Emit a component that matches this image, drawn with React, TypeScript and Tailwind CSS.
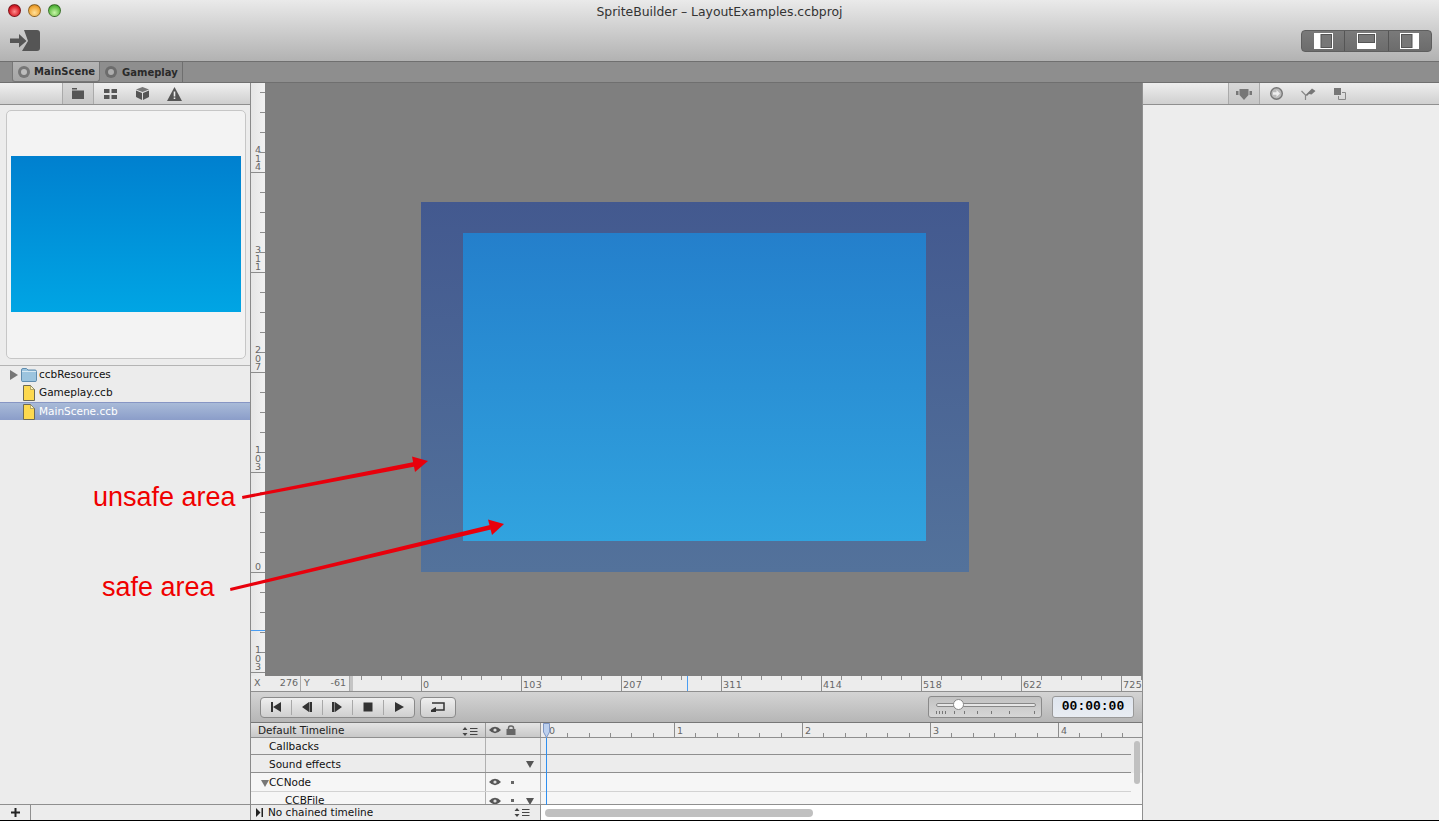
const uiFont = "font-['DejaVu_Sans',sans-serif]";

const hMajor = [
  { x: 421, label: "0" },
  { x: 521, label: "103" },
  { x: 621, label: "207" },
  { x: 721, label: "311" },
  { x: 821, label: "414" },
  { x: 921, label: "518" },
  { x: 1021, label: "622" },
  { x: 1121, label: "725" },
];

const vMajor = [
  { y: 172, label: "414" },
  { y: 272, label: "311" },
  { y: 372, label: "207" },
  { y: 472, label: "103" },
  { y: 572, label: "0" },
  { y: 672, label: "103" },
];

function VerticalRuler() {
  const minor: number[] = [];
  for (let y = 92; y < 676; y += 20) if ((y - 172) % 100 !== 0) minor.push(y);
  return (
    <svg width="14" height="593" viewBox="251 83 14 593" className="shrink-0 bg-gradient-to-r from-[#e6e6e6] to-[#f1f1f1]">
      {minor.map((y) => (
        <rect key={y} x="260" y={y} width="5" height="1" className="fill-[#8c8c8c]" />
      ))}
      {vMajor.map((m) => (
        <g key={m.y}>
          <rect x="251" y={m.y} width="14" height="1" className="fill-[#8c8c8c]" />
          {m.label.split("").map((d, i) => (
            <text
              key={i}
              x="258"
              y={m.y - 2 - (m.label.length - 1 - i) * 8.5}
              textAnchor="middle"
              className="fill-[#666] text-[9.5px]"
            >
              {d}
            </text>
          ))}
        </g>
      ))}
      <rect x="251" y="630" width="14" height="1" className="fill-[#4a9df2]" />
    </svg>
  );
}

function HorizontalRuler() {
  const minor: number[] = [];
  for (let x = 361; x < 1142; x += 20) if ((x - 421) % 100 !== 0) minor.push(x);
  return (
    <svg width="792" height="15" viewBox="350 0 792 15" className="shrink-0">
      <rect x="350" y="0" width="3" height="15" className="fill-[#c4c4c4]" />
      {minor.map((x) => (
        <rect key={x} x={x} y="0" width="1" height="4" className="fill-[#8c8c8c]" />
      ))}
      {hMajor.map((m) => (
        <g key={m.x}>
          <rect x={m.x} y="0" width="1" height="15" className="fill-[#8c8c8c]" />
          <text x={m.x + 2} y="12" className="fill-[#666] text-[9.5px] tracking-[0.3px]">
            {m.label}
          </text>
        </g>
      ))}
      <rect x="687" y="0" width="1" height="15" className="fill-[#4a9df2]" />
    </svg>
  );
}

function TimeRuler() {
  const major = [
    { x: 547, label: "0" },
    { x: 675, label: "1" },
    { x: 803, label: "2" },
    { x: 931, label: "3" },
    { x: 1059, label: "4" },
  ];
  const minor: number[] = [];
  for (let i = 0; i < 28; i++) if (i % 6 !== 0) minor.push(Math.round(547 + i * 21.33));
  return (
    <svg width="600" height="14" viewBox="542 0 600 14" className="shrink-0">
      {minor.map((x) => (
        <rect key={x} x={x} y="10" width="1" height="4" className="fill-[#8c8c8c]" />
      ))}
      {major.map((m) => (
        <g key={m.x}>
          <rect x={m.x} y="0" width="1" height="14" className="fill-[#8c8c8c]" />
          <text x={m.x + 3} y="11" className="fill-[#666] text-[9.5px]">
            {m.label}
          </text>
        </g>
      ))}
    </svg>
  );
}

function Light({ color }: { color: string }) {
  return <div className={`w-[13px] h-[13px] rounded-full border border-black/40 ${color}`} />;
}

function ExportIcon() {
  return (
    <svg width="31" height="22" viewBox="0 0 31 22">
      <path d="M14 0H27Q30 0 30 3V18Q30 21 27 21H12L18 11Z" fill="#555" />
      <path d="M0 8.5H9V4L16.5 11L9 17.5V13H0Z" fill="#555" />
    </svg>
  );
}

function PaneIcon({ kind }: { kind: "left" | "bottom" | "right" }) {
  return (
    <svg width="19" height="16" viewBox="0 0 19 16">
      <rect x="0" y="0" width="19" height="16" fill="white" />
      {kind === "left" && <rect x="7" y="1.5" width="10.5" height="13" fill="#777" stroke="#555" />}
      {kind === "bottom" && <rect x="1.5" y="1.5" width="16" height="8" fill="#777" stroke="#555" />}
      {kind === "right" && <rect x="1.5" y="1.5" width="10.5" height="13" fill="#777" stroke="#555" />}
    </svg>
  );
}

function Eye() {
  return (
    <svg width="12" height="8" viewBox="0 0 12 8">
      <path d="M0 4Q6 -2.5 12 4Q6 10.5 0 4Z" fill="#555" />
      <circle cx="6" cy="4" r="1.6" fill="#ddd" />
    </svg>
  );
}

function Lock() {
  return (
    <svg width="10" height="10" viewBox="0 0 10 10">
      <rect x="0.5" y="4" width="9" height="6" fill="#666" />
      <path d="M2.5 4.5V3Q2.5 1 5 1Q7.5 1 7.5 3V4.5" fill="none" stroke="#666" strokeWidth="1.5" />
    </svg>
  );
}

function SortLines() {
  return (
    <svg width="16" height="9" viewBox="0 0 16 9">
      <path d="M3 0L5.5 3H0.5Z M3 9L0.5 6H5.5Z" fill="#444" />
      <path d="M8 1.5H15.5M8 4.5H15.5M8 7.5H15.5" stroke="#444" strokeWidth="1" />
    </svg>
  );
}

function DownTriangle({ fill = "#555" }: { fill?: string }) {
  return (
    <svg width="8" height="8" viewBox="0 0 8 8">
      <path d="M0 1H8L4 8Z" fill={fill} />
    </svg>
  );
}

function Dot() {
  return <div className="w-[3px] h-[3px] bg-[#666]" />;
}

function FileIcon() {
  return (
    <svg width="12" height="16" viewBox="0 0 12 16">
      <path d="M0.5 0.5H7.5L11.5 4.5V15.5H0.5Z" fill="#fdd94f" stroke="#6d6a55" />
      <path d="M7.5 0.5V4.5H11.5Z" fill="#fff3b5" stroke="#6d6a55" strokeWidth="0.5" />
    </svg>
  );
}

function FolderIcon() {
  return (
    <svg width="16" height="14" viewBox="0 0 16 14">
      <path d="M0.5 2Q0.5 0.5 2 0.5H5.5L7 2H14Q15.5 2 15.5 3.5V12.5Q15.5 13.5 14 13.5H2Q0.5 13.5 0.5 12.5Z" fill="#9cc4de" stroke="#5f8cae" />
      <rect x="1" y="3" width="14" height="1" fill="#d7e9f3" />
    </svg>
  );
}

function ToolTab({ selected, children }: { selected?: boolean; children: React.ReactNode }) {
  return (
    <div
      className={`w-8 h-full flex items-center justify-center ${
        selected ? "border-x border-[#aaa] bg-gradient-to-b from-[#d8d8d8] to-[#c6c6c6]" : ""
      }`}
    >
      {children}
    </div>
  );
}

function TransportIcon({ d }: { d: string }) {
  return (
    <svg width="12" height="10" viewBox="0 0 12 10">
      <path d={d} fill="#333" />
    </svg>
  );
}

function TransportDivider() {
  return <div className="w-px h-[15px] bg-[#a8a8a8]" />;
}

function TimelineRow({
  label,
  indent,
  light,
  soft,
  tri,
  eye,
  dot,
  arrow,
  h,
  pad = "pt-[2px]",
}: {
  label: string;
  indent: string;
  light?: boolean;
  soft?: boolean;
  tri?: boolean;
  eye?: boolean;
  dot?: boolean;
  arrow?: boolean;
  h: string;
  pad?: string;
}) {
  return (
    <div className={`flex shrink-0 ${h}`}>
      <div
        className={`w-[290px] flex border-b ${soft ? "border-[#d2d2d2]" : "border-[#8f8f8f]"} ${
          light ? "bg-[#f6f6f6]" : "bg-[#ececec]"
        }`}
      >
        <div className={`w-[234px] flex items-center ${pad} text-[10.5px] text-[#111] ${indent} overflow-hidden`}>
          {tri && (
            <span className="mr-0">
              <DownTriangle fill="#777" />
            </span>
          )}
          {label}
        </div>
        <div className="w-[56px] border-x border-[#b0b0b0] flex items-center relative">
          {eye && (
            <span className="absolute left-[3px]">
              <Eye />
            </span>
          )}
          {dot && (
            <span className="absolute left-[25px]">
              <Dot />
            </span>
          )}
          {arrow && (
            <span className="absolute left-[40px]">
              <DownTriangle />
            </span>
          )}
        </div>
      </div>
      <div className={`flex-1 flex ${light ? "bg-[#f6f6f6]" : "bg-[#ececec]"}`}>
        <div className={`flex-1 border-b ${soft ? "border-[#d2d2d2]" : "border-[#8f8f8f]"}`} />
        <div className="w-[11px]" />
      </div>
    </div>
  );
}

export default function App() {
  return (
    <div className={`${uiFont} relative w-full h-screen overflow-hidden flex flex-col bg-[#ececec]`}>
      {/* title bar and toolbar */}
      <div className="h-[62px] shrink-0 border-b border-[#6f6f6f] bg-gradient-to-b from-[#eaeaea] to-[#b2b2b2] flex flex-col">
        <div className="relative h-[23px] pt-px flex items-center justify-center text-[12.4px] text-[#333]">
          <div className="absolute left-[8px] top-[4px] flex gap-[7px]">
            <Light color="bg-[radial-gradient(circle_at_50%_60%,#ff8f8f,#d8202a_60%,#a8101a)]" />
            <Light color="bg-[radial-gradient(circle_at_50%_70%,#ffe09a,#f2a93a_60%,#c87a10)]" />
            <Light color="bg-[radial-gradient(circle_at_50%_70%,#c9f5a8,#63bf48_60%,#2f8f20)]" />
          </div>
          SpriteBuilder – LayoutExamples.ccbproj
        </div>
        <div className="flex items-center justify-between pl-[10px] pr-[7px] pt-[7px]">
          <ExportIcon />
          <div className="flex w-[131px] h-[22px] rounded-[4px] border border-[#5e5e5e] bg-gradient-to-b from-[#7a7a7a] to-[#6c6c6c]">
            <div className="flex-1 flex items-center justify-center border-r border-[#555]">
              <PaneIcon kind="left" />
            </div>
            <div className="flex-1 flex items-center justify-center border-r border-[#555]">
              <PaneIcon kind="bottom" />
            </div>
            <div className="flex-1 flex items-center justify-center">
              <PaneIcon kind="right" />
            </div>
          </div>
        </div>
      </div>

      {/* document tabs */}
      <div className="h-[21px] shrink-0 border-b border-[#6f6f6f] bg-[#8e8e8e] flex pl-[12px] text-[10px] font-bold text-[#2a2a2a]">
        <div className="w-[88px] h-[20px] flex items-center gap-[4px] pl-[5px] rounded-b-[3px] border-x border-b border-[#777] bg-gradient-to-b from-[#b4b4b4] to-[#a6a6a6]">
          <div className="w-[12px] h-[12px] rounded-full bg-[#777] flex items-center justify-center">
            <div className="w-[6px] h-[6px] rounded-full bg-[#bdbdbd]" />
          </div>
          MainScene
        </div>
        <div className="w-[83px] h-[20px] flex items-center gap-[5px] pl-[5px] border-r border-[#6f6f6f] bg-[#8e8e8e]">
          <div className="w-[12px] h-[12px] rounded-full bg-[#6c6c6c] flex items-center justify-center">
            <div className="w-[6px] h-[6px] rounded-full bg-[#adadad]" />
          </div>
          Gameplay
        </div>
      </div>

      <div className="flex-1 min-h-0 flex">
        {/* left pane */}
        <div className="w-[251px] shrink-0 border-r border-[#8a8a8a] flex flex-col">
          <div className="h-[22px] shrink-0 border-b border-[#8f8f8f] bg-gradient-to-b from-[#f0f0f0] to-[#cfcfcf] flex items-center pl-[62px]">
            <ToolTab selected>
              <svg width="12" height="11" viewBox="0 0 12 11">
                <path d="M0 0H5V1.5H0Z M0 2.5H12V11H0Z" fill="#555" />
              </svg>
            </ToolTab>
            <ToolTab>
              <svg width="13" height="10" viewBox="0 0 13 10">
                <path d="M0 0H5.5V4H0Z M7.5 0H13V4H7.5Z M0 6H5.5V10H0Z M7.5 6H13V10H7.5Z" fill="#555" />
              </svg>
            </ToolTab>
            <ToolTab>
              <svg width="13" height="13" viewBox="0 0 13 13">
                <path d="M6.5 0L13 2.5L6.5 5L0 2.5Z" fill="#777" />
                <path d="M0 3.5L6 6V13L0 10Z M13 3.5L7 6V13L13 10Z" fill="#555" />
              </svg>
            </ToolTab>
            <ToolTab>
              <svg width="15" height="14" viewBox="0 0 15 14">
                <path d="M7.5 0L15 14H0Z" fill="#555" />
                <path d="M6.7 4.5H8.3V9.5H6.7Z M6.7 10.5H8.3V12H6.7Z" fill="#eee" />
              </svg>
            </ToolTab>
          </div>
          <div className="pl-[6px] pr-[4px] pt-[5px] pb-[6px] bg-[#ececec]">
            <div className="h-[249px] rounded-[5px] border border-[#c6c6c6] bg-[#f3f3f3] px-[4px] pt-[45px]">
              <div className="w-full h-[156px] bg-gradient-to-b from-[#0080cf] to-[#00a5e4]" />
            </div>
          </div>
          <div className="border-t border-[#b4b4b4] flex-1 text-[10.5px] text-[#111]">
            <div className="h-[18px] flex items-center pl-[10px]">
              <svg width="8" height="10" viewBox="0 0 8 10" className="mr-[3px]">
                <path d="M0 0L8 5L0 10Z" fill="#777" />
              </svg>
              <FolderIcon />
              <span className="ml-[2px]">ccbResources</span>
            </div>
            <div className="h-[18px] flex items-center pl-[23px]">
              <FileIcon />
              <span className="ml-[4px]">Gameplay.ccb</span>
            </div>
            <div className="h-[18px] flex items-center pl-[23px] border-t border-[#8796c4] bg-gradient-to-b from-[#a9bbd8] to-[#8b9dc9] text-white">
              <FileIcon />
              <span className="ml-[4px]">MainScene.ccb</span>
            </div>
          </div>
          <div className="h-[16px] shrink-0 border-t border-[#8f8f8f] flex">
            <div className="w-[31px] border-r border-[#8f8f8f] flex items-center justify-center">
              <svg width="9" height="9" viewBox="0 0 9 9">
                <path d="M3.5 0H5.5V3.5H9V5.5H5.5V9H3.5V5.5H0V3.5H3.5Z" fill="#222" />
              </svg>
            </div>
          </div>
        </div>

        {/* center */}
        <div className="w-[892px] shrink-0 flex flex-col border-r border-[#8f8f8f]">
          <div className="h-[593px] shrink-0 flex">
            <VerticalRuler />
            <div className="flex-1 bg-[#7f7f7f] pl-[156px] pt-[119px]">
              <div className="w-[548px] h-[370px] bg-gradient-to-b from-[#43598f] to-[#53729b] pl-[42px] pt-[31px]">
                <div className="w-[463px] h-[308px] bg-gradient-to-b from-[#247fcb] to-[#31a3df]" />
              </div>
            </div>
          </div>

          <div className="h-[16px] shrink-0 border-b border-[#8f8f8f] bg-[#ececec] flex text-[9.5px] text-[#666]">
            <div className="w-[50px] border-r border-[#aaa] flex items-center justify-between pl-[3px] pr-[2px]">
              <span>X</span>
              <span>276</span>
            </div>
            <div className="w-[49px] border-r border-[#aaa] flex items-center justify-between pl-[3px] pr-[3px]">
              <span>Y</span>
              <span>-61</span>
            </div>
            <HorizontalRuler />
          </div>

          <div className="h-[31px] shrink-0 border-b border-[#777] bg-gradient-to-b from-[#d4d4d4] to-[#b6b6b6] flex items-center pl-[9px]">
            <div className="w-[155px] h-[21px] rounded-[4px] border border-[#8a8a8a] bg-gradient-to-b from-[#efefef] to-[#cfcfcf] flex items-center justify-around px-[5px]">
              <TransportIcon d="M1 0H3V10H1Z M3 5L11 0V10Z" />
              <TransportDivider />
              <TransportIcon d="M1 5L8 0V10Z M8.5 0H11V10H8.5Z" />
              <TransportDivider />
              <TransportIcon d="M1 0H3.5V10H1Z M4 0L11 5L4 10Z" />
              <TransportDivider />
              <TransportIcon d="M1.5 0.5H10.5V9.5H1.5Z" />
              <TransportDivider />
              <TransportIcon d="M2 0L11 5L2 10Z" />
            </div>
            <div className="ml-[5px] w-[36px] h-[21px] rounded-[4px] border border-[#8a8a8a] bg-gradient-to-b from-[#efefef] to-[#cfcfcf] flex items-center justify-center">
              <svg width="14" height="10" viewBox="0 0 14 10">
                <path d="M1 1H13V8H5" fill="none" stroke="#333" strokeWidth="1.5" />
                <path d="M0 8L5 5V10H0Z" fill="#333" />
              </svg>
            </div>
            <div className="ml-[472px] w-[114px] h-[22px] rounded-[3px] border border-[#8a8a8a] bg-gradient-to-b from-[#c2c2c2] to-[#d6d6d6] relative">
              <div className="absolute left-[7px] right-[5px] top-[6px] h-[4px] rounded-full bg-[#e6e6e6] border border-[#888]" />
              <div className="absolute left-[24px] top-[2px] w-[11px] h-[11px] rounded-full border border-[#888] bg-white" />
              <svg width="100" height="4" viewBox="0 0 100 4" className="absolute left-[7px] top-[14px]">
                <path d="M0.5 0V3M3.5 0V3M6.5 0V3M9.5 0V3M18.5 0V3M28.5 0V3M41.5 0V3M55.5 0V3M73.5 0V3M98.5 0V3" stroke="#777" strokeWidth="1" />
              </svg>
            </div>
            <div className="ml-[10px] w-[82px] h-[22px] rounded-[3px] border border-[#999] bg-gradient-to-b from-[#dfe5ee] to-[#e9edf3] flex items-center justify-center font-['Liberation_Mono',monospace] font-bold text-[13px] text-black">
              00:00:00
            </div>
          </div>

          {/* timeline */}
          <div className="flex-1 min-h-0 relative flex flex-col">
            <div className="h-[15px] shrink-0 border-b border-[#8f8f8f] flex text-[10.5px] text-[#222]">
              <div className="w-[234px] pt-[2px] bg-gradient-to-b from-[#e4e4e4] to-[#c8c8c8] flex items-center justify-between pl-[7px] pr-[7px]">
                Default Timeline
                <SortLines />
              </div>
              <div className="w-[56px] border-x border-[#999] bg-gradient-to-b from-[#e4e4e4] to-[#c8c8c8] flex items-center gap-[5px] pl-[3px]">
                <Eye />
                <Lock />
              </div>
              <div className="flex-1 bg-[#ececec] overflow-hidden">
                <TimeRuler />
              </div>
            </div>
            <div className="flex-1 min-h-0 overflow-hidden flex flex-col relative">
              <TimelineRow h="h-[17px]" label="Callbacks" indent="pl-[18px]" />
              <TimelineRow h="h-[18px]" label="Sound effects" indent="pl-[18px]" arrow />
              <TimelineRow h="h-[19px]" label="CCNode" indent="pl-[10px]" light soft tri eye dot />
              <TimelineRow h="h-[18px]" label="CCBFile" indent="pl-[34px]" pad="pt-0" light soft eye dot arrow />
              <div className="absolute right-[2px] top-[3px] w-[6px] h-[43px] rounded-full bg-[#c0c0c0]" />
            </div>
            <div className="h-[16px] shrink-0 border-t border-[#8f8f8f] bg-[#ececec] flex text-[10.5px] text-[#111]">
              <div className="w-[234px] flex items-center pl-[5px]">
                <svg width="7" height="9" viewBox="0 0 7 9" className="mr-[5px]">
                  <path d="M0 0L4.5 4.5L0 9Z M5.5 0H7V9H5.5Z" fill="#222" />
                </svg>
                No chained timeline
              </div>
              <div className="w-[56px] border-r border-[#8f8f8f] flex items-center pl-[29px]">
                <SortLines />
              </div>
              <div className="flex-1 bg-white flex items-center pl-[4px]">
                <div className="w-[268px] h-[8px] rounded-full bg-[#c0c0c0]" />
              </div>
            </div>
            {/* playhead */}
            <div className="absolute left-[295px] top-[14px] bottom-[15px] w-[1px] bg-[#2f8fef]" />
            <svg width="7" height="15" viewBox="0 0 7 15" className="absolute left-[292px] top-0">
              <path d="M0.5 0.5H6.5V9L3.5 14.5L0.5 9Z" fill="#bcd0ee" stroke="#7f97c4" />
            </svg>
          </div>
        </div>

        {/* right pane */}
        <div className="flex-1 flex flex-col bg-[#ededed]">
          <div className="h-[22px] shrink-0 border-b border-[#8f8f8f] bg-gradient-to-b from-[#eeeeee] to-[#d0d0d0] flex items-center pl-[85px]">
            <ToolTab selected>
              <svg width="16" height="12" viewBox="0 0 16 12">
                <path d="M3.5 1H12.5V7L8 12L3.5 7Z M0 3H2.5V7H0Z M13.5 3H16V7H13.5Z" fill="#777" />
              </svg>
            </ToolTab>
            <ToolTab>
              <svg width="13" height="13" viewBox="0 0 13 13">
                <circle cx="6.5" cy="6.5" r="5.8" fill="#bbb" stroke="#777" strokeWidth="1.4" />
                <path d="M3 5.2H6.5V3L10 6.5L6.5 10V7.8H3Z" fill="#eee" />
              </svg>
            </ToolTab>
            <ToolTab>
              <svg width="15" height="13" viewBox="0 0 15 13">
                <path d="M0.5 4L4.5 8V13" fill="none" stroke="#888" strokeWidth="1.2" />
                <path d="M4.5 8L11 1.5L14.5 4L10.5 7.5L8 7L6 9Z" fill="#777" />
              </svg>
            </ToolTab>
            <ToolTab>
              <svg width="12" height="12" viewBox="0 0 12 12">
                <path d="M0 0H7V7H0Z" fill="#777" />
                <path d="M8 4.5H11.5V11.5H4.5V8" fill="none" stroke="#888" />
              </svg>
            </ToolTab>
          </div>
        </div>
      </div>
      <div className="h-px shrink-0 bg-black" />

      {/* annotations */}
      <div className="absolute left-[93px] top-[483px] font-['Liberation_Sans',sans-serif] text-[27px] leading-[28px] text-[#f00000]">
        unsafe area
      </div>
      <div className="absolute left-[102px] top-[573px] font-['Liberation_Sans',sans-serif] text-[27px] leading-[28px] text-[#f00000]">
        safe area
      </div>
      <svg width="1439" height="821" className="absolute left-0 top-0 pointer-events-none">
        <path d="M242 496L414 462L415 466.5L242.5 499Z" fill="#e8000c" />
        <path d="M428 461L412 456.5L415 472Z" fill="#e8000c" />
        <path d="M230 588L490 525L491 529.5L230.5 591Z" fill="#e8000c" />
        <path d="M504 524L488 519.5L492 535Z" fill="#e8000c" />
      </svg>
    </div>
  );
}
